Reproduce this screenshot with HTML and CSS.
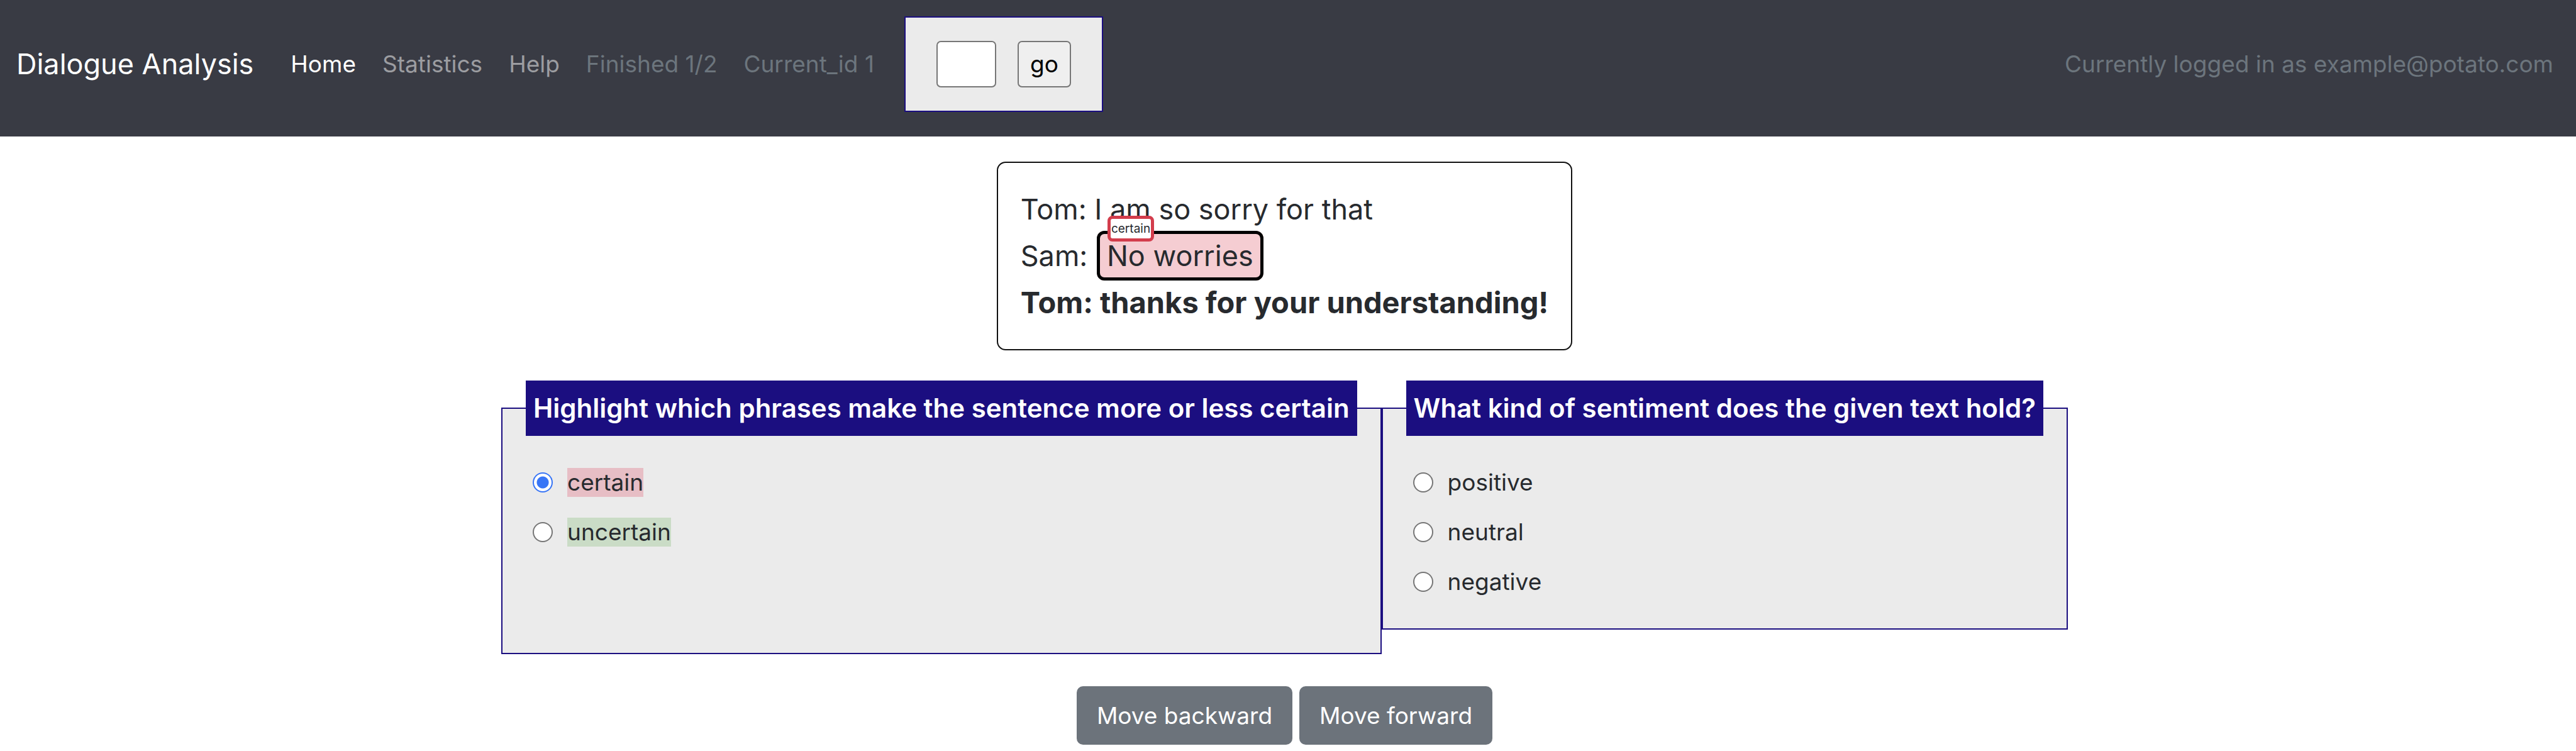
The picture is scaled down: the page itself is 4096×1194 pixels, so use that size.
FILE: index.html
```html
<!DOCTYPE html>
<html lang="en">
<head>
<meta charset="utf-8">
<title>Dialogue Analysis</title>
<link rel="stylesheet" href="styles.css">
</head>
<body>
<header class="navbar">
  <a class="brand" href="#">Dialogue Analysis</a>
  <nav class="nav-links">
    <a class="nav-link active" href="#">Home</a>
    <a class="nav-link" href="#">Statistics</a>
    <a class="nav-link" href="#">Help</a>
    <span class="nav-info">Finished 1/2</span>
    <span class="nav-info">Current_id 1</span>
  </nav>
  <form class="goto">
    <input class="goto-input" type="text" aria-label="Go to item">
    <button class="goto-button" type="button">go</button>
  </form>
  <span class="nav-info user">Currently logged in as example@potato.com</span>
</header>
<main class="content">
  <section class="dialogue">
    <p class="line">Tom: I am so sorry for that</p>
    <p class="line">Sam: <span class="highlight">No worries<span class="tag">certain</span></span></p>
    <p class="line current">Tom: thanks for your understanding!</p>
  </section>
  <form class="annotation">
    <div class="questions">
      <fieldset class="question question-spans">
        <legend class="question-title">Highlight which phrases make the sentence more or less certain</legend>
        <div class="options">
          <div class="option"><input class="radio" type="radio" name="certainty" id="certain" checked><label class="mark-red" for="certain">certain</label></div>
          <div class="option"><input class="radio" type="radio" name="certainty" id="uncertain"><label class="mark-green" for="uncertain">uncertain</label></div>
        </div>
      </fieldset>
      <fieldset class="question">
        <legend class="question-title">What kind of sentiment does the given text hold?</legend>
        <div class="options">
          <div class="option"><input class="radio" type="radio" name="sentiment" id="positive"><label for="positive">positive</label></div>
          <div class="option"><input class="radio" type="radio" name="sentiment" id="neutral"><label for="neutral">neutral</label></div>
          <div class="option"><input class="radio" type="radio" name="sentiment" id="negative"><label for="negative">negative</label></div>
        </div>
      </fieldset>
    </div>
    <div class="actions">
      <button class="button" type="button">Move backward</button>
      <button class="button" type="button">Move forward</button>
    </div>
  </form>
</main>
</body>
</html>
```
FILE: styles.css
```css
* {
  box-sizing: border-box;
}

body {
  margin: 0;
  background: #fff;
  color: #272a2e;
  font-family: Inter, "Liberation Sans", sans-serif;
  font-size: 37px;
  line-height: 58px;
}

/* Navigation bar */
.navbar {
  display: flex;
  align-items: center;
  padding: 26px 36px 39px 26px;
  background: #393b44;
  white-space: nowrap;
}

.brand {
  margin-right: 59px;
  color: #fff;
  font-size: 45px;
  text-decoration: none;
}

.nav-links {
  display: flex;
  gap: 42px;
}

.nav-link {
  color: #9c9da1;
  text-decoration: none;
}

.nav-link.active {
  color: #fff;
}

.nav-info {
  color: #6c757d;
}

.user {
  margin-left: auto;
}

.goto {
  display: flex;
  gap: 34px;
  margin-left: 48px;
  padding: 37px 49px;
  border: 2px solid #1b0e80;
  background: #ebebeb;
}

.goto-input,
.goto-button {
  height: 74px;
  border: 2px solid #767676;
  border-radius: 7px;
  font: inherit;
}

.goto-input {
  width: 95px;
  background: #fff;
}

.goto-button {
  padding: 0 18px;
  background: #efefef;
  color: #000;
}

/* Dialogue card */
.content {
  display: flex;
  flex-direction: column;
  align-items: center;
  gap: 48px;
  padding: 40px 11px 8px 0;
}

.dialogue {
  padding: 37px 36px;
  border: 2px solid #111;
  border-radius: 14px;
  font-size: 45px;
  line-height: 74px;
}

.line {
  margin: 0;
}

.line.current {
  font-size: 47px;
  font-weight: 700;
}

.highlight {
  position: relative;
  margin-left: 2px;
  padding: 7px 11px;
  border: 5px solid #000;
  border-radius: 12px;
  background: #f5cdd2;
}

.tag {
  position: absolute;
  top: -29px;
  left: 12px;
  padding: 0 1px;
  border: 5px solid #d33d4c;
  border-radius: 8px;
  background: #fff;
  font-size: 19px;
  line-height: 31px;
}

/* Questions */
.questions {
  display: flex;
  align-items: flex-start;
}

.question {
  min-width: 0;
  margin: 0;
  padding: 45px 37px;
  border: 2px solid #1b0e80;
  background: #ebebeb;
}

.question-spans {
  padding-bottom: 163px;
}

.question-title {
  padding: 12px;
  background: #1b0e80;
  color: #fff;
  font-size: 42px;
  font-weight: 600;
  line-height: 64px;
}

.options {
  display: flex;
  flex-direction: column;
  gap: 21px;
  padding-left: 11px;
}

.option {
  display: flex;
  align-items: center;
  gap: 23px;
  height: 58px;
}

.option label {
  line-height: 46px;
}

.mark-red {
  background: #e7bec5;
}

.mark-green {
  background: #cadcc6;
}

.radio {
  appearance: none;
  width: 32px;
  height: 32px;
  margin: 0;
  border: 2px solid #767676;
  border-radius: 50%;
  background: #fff;
}

.radio:checked {
  border-color: #3875f6;
  background: radial-gradient(circle, #3875f6 9px, #fff 10px);
}

/* Page actions */
.actions {
  display: flex;
  justify-content: center;
  gap: 11px;
  margin-top: 51px;
}

.button {
  padding: 18px 32px;
  border: 0;
  border-radius: 10px;
  background: #6c737b;
  color: #fff;
  font: inherit;
  line-height: 57px;
}
```
